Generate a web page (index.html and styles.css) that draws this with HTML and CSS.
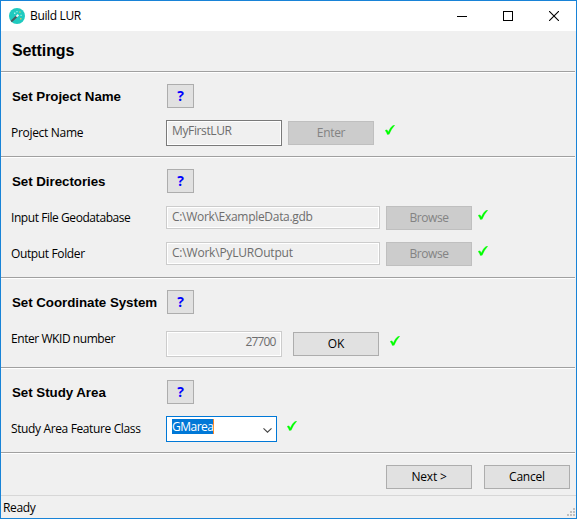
FILE: index.html
```
<!DOCTYPE html>
<html lang="en">
<head>
<meta charset="utf-8">
<title>Build LUR</title>
<link rel="stylesheet" href="styles.css">
</head>
<body>
<svg width="0" height="0" class="defs" aria-hidden="true">
  <symbol id="check" viewBox="0 0 10 10"><path d="M0 5.5 L2 4.8 L3.3 7 C4.5 4 6.2 1.6 8.4 0.2 L9.8 0.2 C7.2 3 5.6 6 4.2 9.2 L2.3 9.5 C1.8 7.8 1.1 6.6 0 5.5Z" fill="#0f0" stroke="#0f0" stroke-width=".3"/></symbol>
</svg>
<div class="window">
  <header class="titlebar">
    <svg class="app-icon" viewBox="0 0 16 16">
      <circle cx="8" cy="8" r="8" fill="#1fcabf"/>
      <path d="M2.2 13.4 L7.8 8.2" stroke="#4b5a60" stroke-width="2"/>
      <path d="M7.4 8.6 L9.4 6.7" stroke="#f4f4f4" stroke-width="2"/>
      <path d="M5 4.6h1.4v1.4H5zM7.4 3h1.2v1.2H7.4zM11.5 6.7h1.2v1.2h-1.2z" fill="#a5f0e6"/>
      <path d="M10.2 3.4h1.4v1.4h-1.4zM11 10h1.5v1.5H11z" fill="#c5c96c"/>
    </svg>
    <span class="title">Build LUR</span>
    <div class="controls">
      <svg viewBox="0 0 10 10" shape-rendering="crispEdges"><path d="M0 5.5H10" stroke="#000"/></svg>
      <svg viewBox="0 0 10 10" shape-rendering="crispEdges"><path d="M.5 .5H9.5V9.5H.5Z" fill="none" stroke="#000"/></svg>
      <svg viewBox="0 0 10 10"><path d="M0 0L10 10M10 0L0 10" stroke="#000" stroke-width="1.1"/></svg>
    </div>
  </header>
  <main>
    <div class="heading rule"><h1>Settings</h1></div>

    <section class="project rule">
      <div class="row head"><h2>Set Project Name</h2><button class="help">?</button></div>
      <div class="row field">
        <label class="normal">Project Name</label>
        <div class="input tall dark"><span class="snug">MyFirstLUR</span></div>
        <button class="btn off"><span class="normal">Enter</span></button>
        <svg class="check"><use href="#check"/></svg>
      </div>
    </section>

    <section class="dirs rule">
      <div class="row head"><h2>Set Directories</h2><button class="help">?</button></div>
      <div class="row field">
        <label class="tight">Input File Geodatabase</label>
        <div class="input wide"><span class="normal">C:\Work\ExampleData.gdb</span></div>
        <button class="btn off"><span class="tight">Browse</span></button>
        <svg class="check"><use href="#check"/></svg>
      </div>
      <div class="row field">
        <label class="snug">Output Folder</label>
        <div class="input wide"><span class="loose">C:\Work\PyLUROutput</span></div>
        <button class="btn off"><span class="tight">Browse</span></button>
        <svg class="check"><use href="#check"/></svg>
      </div>
    </section>

    <section class="coord rule">
      <div class="row head"><h2>Set Coordinate System</h2><button class="help">?</button></div>
      <div class="row field">
        <label class="tight">Enter WKID number</label>
        <div class="input tall num"><span class="digits">27700</span></div>
        <button class="btn"><span>OK</span></button>
        <svg class="check"><use href="#check"/></svg>
      </div>
    </section>

    <section class="study rule">
      <div class="row head"><h2>Set Study Area</h2><button class="help">?</button></div>
      <div class="row field">
        <label class="snug">Study Area Feature Class</label>
        <div class="combo"><span class="sel">GMarea</span><svg class="chev" viewBox="0 0 9 5"><path d="M.5 .4L4.5 4.2L8.5 .4" fill="none" stroke="#444" stroke-width="1.1"/></svg></div>
        <svg class="check"><use href="#check"/></svg>
      </div>
    </section>

    <div class="actions">
      <button class="btn"><span class="loose">Next &gt;</span></button>
      <button class="btn"><span class="loose">Cancel</span></button>
    </div>
  </main>
  <footer class="status">
    <span class="snug">Ready</span>
    <svg class="grip" viewBox="0 0 8 8" shape-rendering="crispEdges"><path d="M6 0h2v2H6zM3 3h2v2H3zM6 3h2v2H6zM0 6h2v2H0zM3 6h2v2H3zM6 6h2v2H6z" fill="#bfbfbf"/></svg>
  </footer>
</div>
</body>
</html>
```
FILE: styles.css
```
* { box-sizing: border-box; }
body { margin: 0; font: 12px/16px "Open Sans", "Noto Sans", sans-serif; color: #000; }
.defs { position: absolute; }
svg { display: block; flex: none; }
.window { width: 577px; height: 519px; border: 1px solid #1883d7; background: #f0f0f0; display: flex; flex-direction: column; }
.titlebar { height: 30px; background: #fff; display: flex; align-items: center; padding: 0 17px 0 8px; flex: none; }
.app-icon { width: 16px; height: 16px; margin-top: -1px; }
.title { margin-left: 5px; letter-spacing: -.35px; white-space: nowrap; }
.controls { margin-left: auto; display: flex; gap: 36px; margin-top: -1px; }
.controls svg { width: 10px; height: 10px; }
.loose { letter-spacing: -.2px; }
.normal { letter-spacing: -.3px; }
.snug { letter-spacing: -.37px; }
.tight { letter-spacing: -.44px; }
.digits { letter-spacing: -.9px; margin-right: .6px; }
main { flex: 1; }
.rule { border-bottom: 1px solid #fff; box-shadow: inset 0 -1px #a0a0a0; margin-right: 1px; }
.heading { height: 42px; padding: 10px 11px; }
h1, h2 { margin: 0; font-family: "Liberation Sans", Arial, sans-serif; font-weight: bold; white-space: nowrap; }
h1 { font-size: 16px; line-height: 20px; letter-spacing: -.1px; }
h2 { font-size: 13.33px; line-height: 24px; width: 155px; padding-top: 1px; margin-bottom: -1px; letter-spacing: -.04px; }
section { padding: 11px 0 0 11px; }
.project { height: 85px; }
.dirs { height: 121px; }
.coord { height: 90px; }
.study { height: 85px; }
.row { display: flex; align-items: flex-start; }
button { font: inherit; margin: 0; padding: 0; flex: none; color: #000; background: #e1e1e1; border: 1px solid #adadad; }
.help { width: 27px; height: 24px; line-height: 22px; color: #00f; font-weight: bold; font-size: 14px; }
.btn { width: 86px; height: 24px; line-height: 22px; }
.btn.off { background: #ccc; border-color: #bfbfbf; color: #838383; }
label { width: 155px; margin-left: -1px; line-height: 24px; white-space: nowrap; flex: none; }
.input { width: 116px; height: 26px; border: 1px solid #ccc; box-shadow: inset 0 0 0 1px #fff; padding: 2px 5px; line-height: 16px; color: #6d6d6d; white-space: nowrap; flex: none; }
.input.dark { border-color: #7a7a7a; }
.input.wide { width: 214px; height: 23px; }
.input.num { text-align: right; }
.check { width: 10px; height: 10px; margin-top: 5px; margin-left: 11px; }
.project .field { margin-top: 12px; }
.project label { margin-top: 1px; }
.project .btn { margin: 1px 0 0 6px; }
.dirs .field { height: 36px; }
.dirs .head + .field { margin-top: 13px; }
.dirs .btn { margin-left: 6px; }
.dirs .check { margin: 4px 0 0 6px; }
.coord .field { margin-top: 17px; }
.coord label { margin-top: -4px; }
.coord .btn { margin: 1px 0 0 11px; }
.study .field { margin-top: 12px; }
.study label { margin-top: 1px; }
.study .check { margin-left: 10px; }
.combo { width: 111px; height: 26px; border: 1px solid #0078d7; background: #fff; padding: 2px 4px 0 5px; display: flex; justify-content: space-between; flex: none; }
.sel { background: #0078d7; color: #fff; height: 15px; line-height: 15px; width: 42px; border-right: 1px solid #ff8728; letter-spacing: -.5px; white-space: nowrap; }
.chev { width: 9px; height: 5px; margin-top: 9px; }
.actions { display: flex; justify-content: flex-end; gap: 12px; padding: 11px 6px 0 0; }
.status { height: 23px; border-top: 1px solid #d7d7d7; padding: 4px 1px 0 2px; display: flex; justify-content: space-between; flex: none; }
.grip { width: 8px; height: 8px; margin-top: 8px; }
```
